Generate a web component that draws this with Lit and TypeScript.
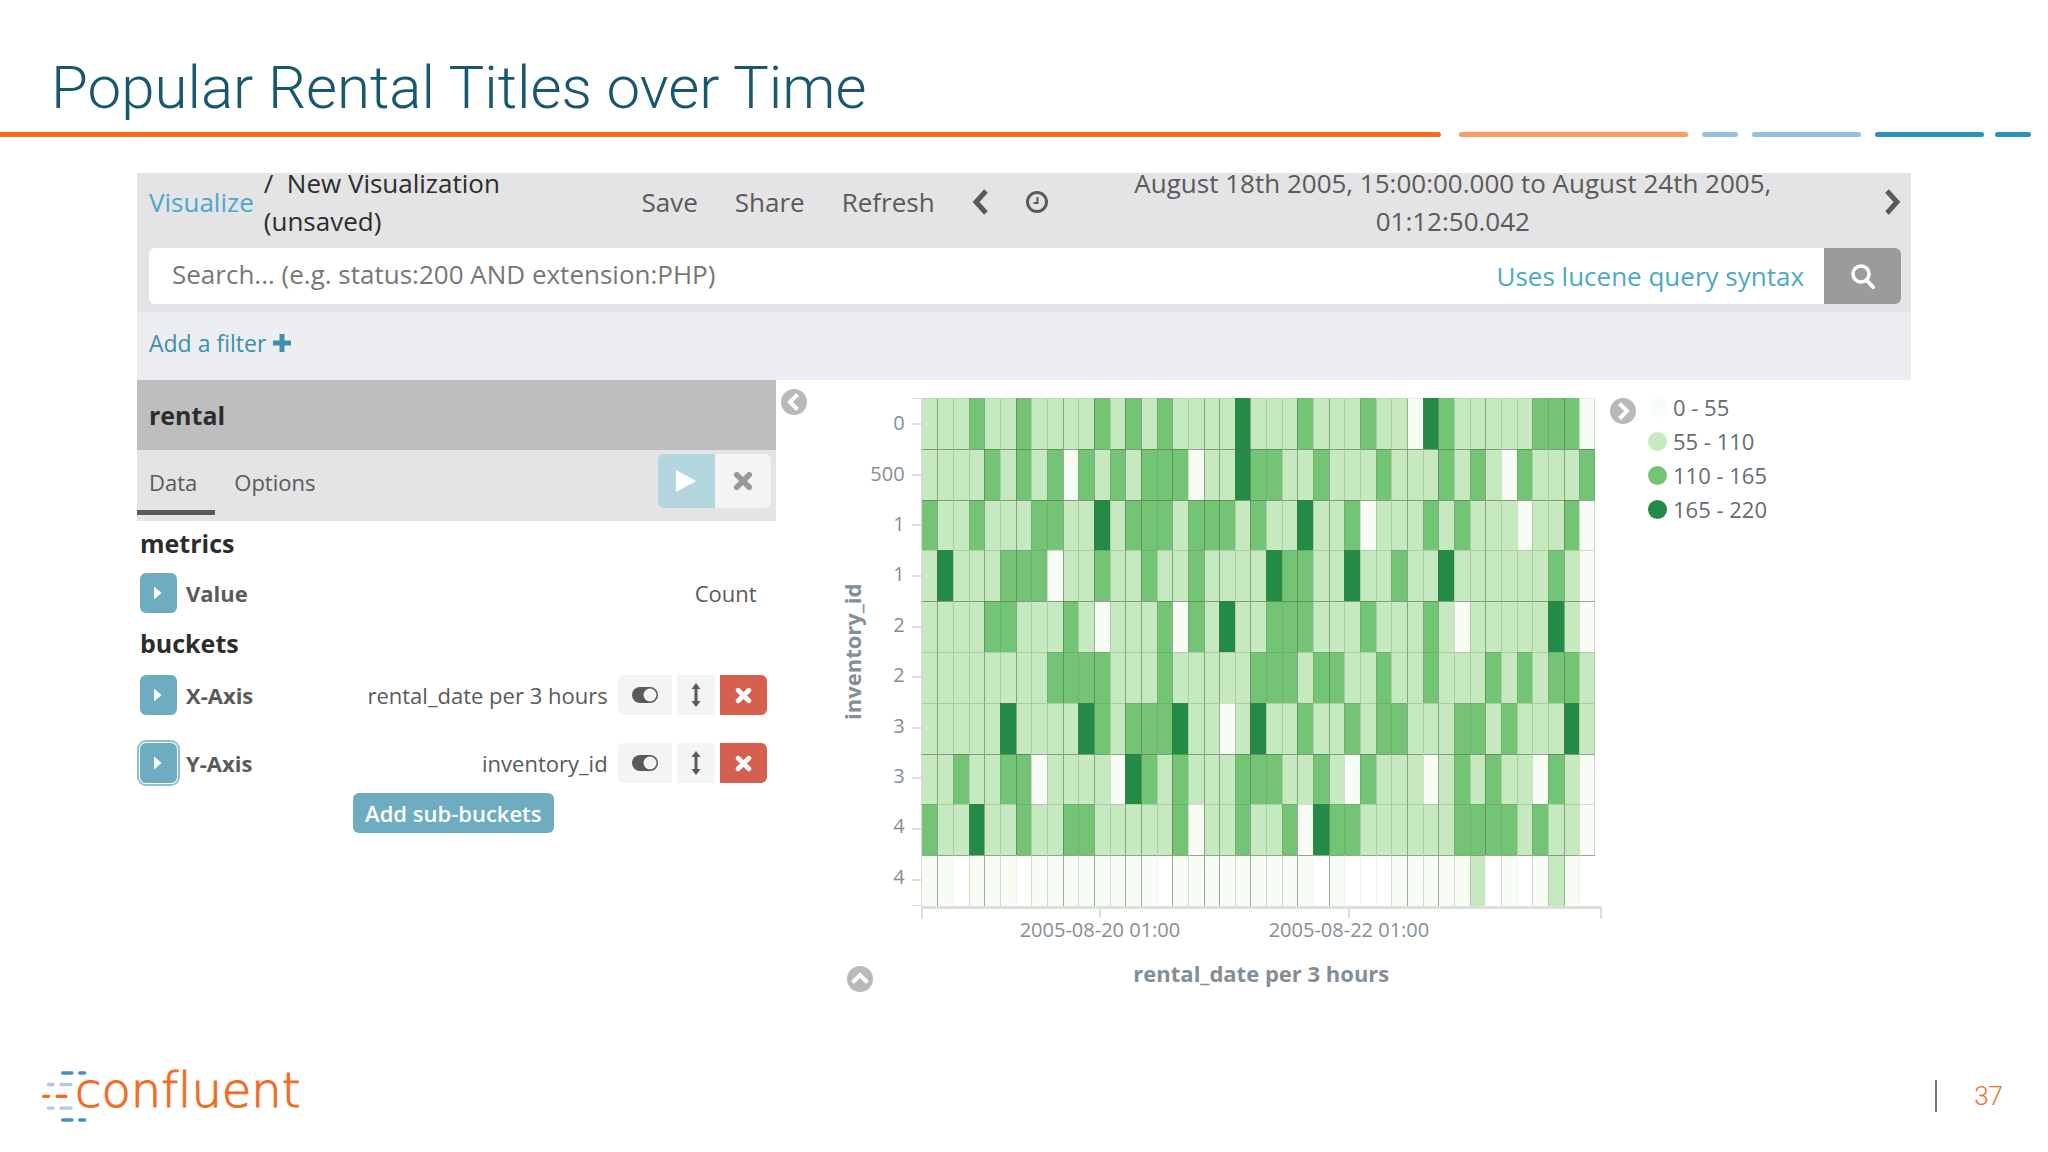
import { LitElement, html, css, svg } from 'lit';
import { customElement } from 'lit/decorators.js';
import { classMap } from 'lit/directives/class-map.js';

/* Heatmap levels per cell: 0..3 are the legend buckets, x is a cell without data. */
const COLUMNS = 43;

function buildRow(base: string, levels: Record<string, number[]>): string[] {
  const row = Array<string>(COLUMNS).fill(base);
  for (const [level, columns] of Object.entries(levels)) {
    for (const c of columns) row[c] = level;
  }
  return row;
}

const ROWS = [
  { label: '0', cells: buildRow('1', { 2: [3, 6, 11, 13, 15, 24, 28, 33, 39, 40, 41], 3: [20, 32], 0: [31, 42] }) },
  { label: '500', cells: buildRow('1', { 2: [4, 6, 8, 10, 12, 14, 15, 16, 21, 22, 25, 29, 33, 35, 38, 42], 3: [20], 0: [9, 17, 37] }) },
  { label: '1', cells: buildRow('1', { 2: [0, 3, 7, 8, 13, 14, 15, 17, 18, 19, 21, 27, 32, 34, 41], 3: [11, 24], 0: [28, 38, 42] }) },
  { label: '1', cells: buildRow('1', { 2: [5, 6, 7, 11, 14, 17, 23, 24, 30, 40], 3: [1, 22, 27, 33], 0: [8, 42] }) },
  { label: '2', cells: buildRow('1', { 2: [4, 5, 9, 15, 17, 22, 23, 24, 28, 32], 3: [19, 40], 0: [11, 16, 34, 42] }) },
  { label: '2', cells: buildRow('1', { 2: [8, 9, 10, 11, 15, 21, 22, 23, 25, 26, 29, 32, 36, 38, 40, 41] }) },
  { label: '3', cells: buildRow('1', { 2: [11, 13, 14, 15, 24, 27, 29, 30, 34, 35, 37], 3: [5, 10, 16, 21, 41], 0: [19] }) },
  { label: '3', cells: buildRow('1', { 2: [2, 5, 6, 14, 16, 20, 21, 22, 25, 28, 34, 36, 40], 3: [13], 0: [7, 12, 27, 32, 39, 42] }) },
  { label: '4', cells: buildRow('1', { 2: [0, 6, 9, 10, 16, 20, 23, 26, 27, 34, 35, 36, 37, 39], 3: [3, 25], 0: [17, 24, 42] }) },
  { label: '4', cells: buildRow('0', { 1: [35, 40], x: [2, 6, 15, 25, 27, 28, 29, 36, 38, 42] }) },
];

const STRONG_COLUMNS = new Set([1, 4, 6, 9, 11, 13, 14, 16, 18, 19, 21, 24, 26, 31, 33, 36, 41]);
const STRONG_ROWS = new Set([1, 2, 4, 7, 9]);

const LEGEND = [
  { level: 'l0', text: '0 - 55' },
  { level: 'l1', text: '55 - 110' },
  { level: 'l2', text: '110 - 165' },
  { level: 'l3', text: '165 - 220' },
];

const icon = (w: number, h: number, body: unknown) =>
  html`<svg width=${w} height=${h} viewBox="0 0 ${w} ${h}" aria-hidden="true">${body}</svg>`;

const chevronLeft = icon(16, 26, svg`<path d="M14 2 4 13l10 11" fill="none" stroke="currentColor" stroke-width="5"/>`);
const chevronRight = icon(16, 26, svg`<path d="M2 2l10 11L2 24" fill="none" stroke="currentColor" stroke-width="5"/>`);
const clock = icon(24, 26, svg`<circle cx="12" cy="13" r="9.5" fill="none" stroke="currentColor" stroke-width="3"/><path d="M12.500 8v6H8.500" fill="none" stroke="currentColor" stroke-width="2"/>`);
const magnifier = icon(26, 26, svg`<circle cx="11" cy="11" r="8" fill="none" stroke="currentColor" stroke-width="3.500"/><path d="M16.500 17l6.500 7" stroke="currentColor" stroke-width="4" stroke-linecap="round"/>`);
const plus = icon(18, 18, svg`<path d="M9 0v18M0 9h18" stroke="currentColor" stroke-width="5"/>`);
const play = icon(22, 22, svg`<path d="M1 0l20 11L1 22z" fill="currentColor"/>`);
const cross = (size: number) => html`<svg width=${size} height=${size} viewBox="0 0 16 16" aria-hidden="true"><path d="M3 3l10 10M13 3L3 13" stroke="currentColor" stroke-width="4.500" stroke-linecap="round"/></svg>`;
const caret = icon(10, 14, svg`<path d="M1 0.500l7.500 6.500L1 13.500z" fill="currentColor"/>`);
const toggle = icon(26, 16, svg`<rect width="26" height="16" rx="8" fill="currentColor"/><circle cx="18" cy="8" r="6.500" fill="#f4f3f5"/>`);
const upDown = icon(10, 24, svg`<path d="M5 4v16" stroke="currentColor" stroke-width="3"/><path d="M5 0l4.500 6h-9zM5 24l4.500-6h-9z" fill="currentColor"/>`);
const disc = (d: string) => icon(26, 26, svg`<circle cx="13" cy="13" r="13" fill="#b9b8ba"/><path d=${d} fill="none" stroke="#fff" stroke-width="4"/>`);
const discLeft = disc('M16.500 5.500 9 13l7.500 7.500');
const discRight = disc('M9.500 5.500 17 13l-7.500 7.500');
const discUp = disc('M5.500 16.500 13 9l7.500 7.500');

@customElement('query-bar')
export class QueryBar extends LitElement {
  static styles = css`
    :host { display: block; font: 26px/38px 'Open Sans', sans-serif; color: #5a5a5a; }
    a { text-decoration: none; color: #4aa9cb; }
    button { font: inherit; color: inherit; background: none; border: 0; padding: 0; cursor: pointer; }
    svg { display: block; }
    .top { background: #e4e3e5; padding: 0 10px 8px 12px; }
    .nav { display: flex; align-items: center; gap: 37px; height: 58px; padding-bottom: 17px; }
    .crumbs { display: flex; align-items: center; gap: 10px; width: 26%; }
    .current { color: #2d2d2d; padding-right: 24px; }
    .range { flex: 1; text-align: center; padding: 0 28px 0 0; }
    .search { display: flex; height: 56px; background: #fff; border-radius: 6px; overflow: hidden; align-items: center; }
    input { flex: 1; min-width: 0; border: 0; outline: 0; background: none; font: inherit; padding: 0 0 4px 23px; color: #333; }
    input::placeholder { color: #777; opacity: 1; }
    .go { width: 77px; height: 56px; margin-left: 20px; background: #9c9a9d; color: #fff; display: grid; place-items: center; }
    .filters { background: #eceef2; height: 62px; padding: 0 12px 6px; display: flex; align-items: center; font-size: 23px; }
    .filters a { display: flex; align-items: center; gap: 7px; color: #3c90ab; }
  `;
  render() {
    return html`
      <div class="top">
        <div class="nav">
          <div class="crumbs">
            <a href="#visualize">Visualize</a>
            <span class="current">/ &nbsp;New Visualization (unsaved)</span>
          </div>
          <button>Save</button>
          <button>Share</button>
          <button>Refresh</button>
          <button aria-label="Earlier">${chevronLeft}</button>
          <button aria-label="Time range">${clock}</button>
          <button class="range">August 18th 2005, 15:00:00.000 to August 24th 2005, 01:12:50.042</button>
          <button aria-label="Later">${chevronRight}</button>
        </div>
        <div class="search">
          <input type="text" aria-label="Search" placeholder="Search... (e.g. status:200 AND extension:PHP)" />
          <a href="#lucene">Uses lucene query syntax</a>
          <button class="go" aria-label="Run search">${magnifier}</button>
        </div>
      </div>
      <div class="filters"><a href="#filter">Add a filter ${plus}</a></div>
    `;
  }
}

@customElement('vis-editor')
export class VisEditor extends LitElement {
  static styles = css`
    :host { display: block; font: 22px/32px 'Open Sans', sans-serif; color: #5a5a5a; }
    button { font: inherit; color: inherit; border: 0; padding: 0; cursor: pointer; display: grid; place-items: center; }
    svg { display: block; }
    h2, h3 { margin: 0; font-size: 25px; line-height: 32px; font-weight: 700; color: #2d2d2d; }
    h2 { background: #bebdbf; padding: 19px 12px; }
    .bar { display: flex; justify-content: space-between; background: #e4e3e5; height: 71px; padding-right: 5px; }
    .tabs { display: flex; height: 65px; }
    .tab { background: none; padding: 4px 18px 0 19px; border-bottom: 5px solid transparent; }
    .tab.active { padding-left: 12px; border-color: #5a5a5a; }
    .apply { display: flex; height: 54px; margin-top: 4px; border-radius: 6px; overflow: hidden; }
    .run { width: 57px; background: #b3d6df; color: #fff; }
    .discard { width: 56px; background: #f4f3f5; color: #999; }
    .body { padding: 6px 9px 0 3px; }
    .row { display: flex; align-items: center; height: 40px; }
    .row b { margin-left: 9px; flex: 1; }
    .open { width: 37px; height: 40px; border-radius: 6px; background: #6eadc1; color: #fff; padding-right: 2px; }
    .open.focused { box-shadow: 0 0 0 1px #fff, 0 0 0 3px #8fc1cd; }
    .value { margin: 14px 0; }
    .value span { padding-right: 10px; }
    .axis { margin-top: 16px; }
    .axis.second { margin-top: 28px; }
    .tools { display: flex; gap: 5px; margin-left: 10px; }
    .tools button { height: 40px; background: #f4f3f5; width: 38px; }
    .tools .enable { width: 54px; border-radius: 6px 0 0 6px; }
    .tools .remove { width: 47px; border-radius: 0 6px 6px 0; background: #d6604f; color: #fff; }
    .add { margin: 10px auto 0; height: 40px; padding: 0 12px; border-radius: 6px; background: #6eadc1; color: #fff; font-weight: 600; }
  `;
  private axis(name: string, detail: string, second: boolean) {
    return html`
      <div class=${classMap({ row: true, axis: true, second })}>
        <button class=${classMap({ open: true, focused: second })} aria-label="Open ${name}">${caret}</button>
        <b>${name}</b><span>${detail}</span>
        <div class="tools">
          <button class="enable" aria-label="Disable ${name}">${toggle}</button>
          <button aria-label="Move ${name}">${upDown}</button>
          <button class="remove" aria-label="Remove ${name}">${cross(17)}</button>
        </div>
      </div>
    `;
  }
  render() {
    return html`
      <h2>rental</h2>
      <div class="bar">
        <div class="tabs">
          <button class="tab active">Data</button>
          <button class="tab">Options</button>
        </div>
        <div class="apply">
          <button class="run" aria-label="Apply changes">${play}</button>
          <button class="discard" aria-label="Discard changes">${cross(20)}</button>
        </div>
      </div>
      <div class="body">
        <h3>metrics</h3>
        <div class="row value">
          <button class="open" aria-label="Open Value">${caret}</button>
          <b>Value</b><span>Count</span>
        </div>
        <h3>buckets</h3>
        ${this.axis('X-Axis', 'rental_date per 3 hours', false)}
        ${this.axis('Y-Axis', 'inventory_id', true)}
        <button class="add">Add sub-buckets</button>
      </div>
    `;
  }
}

@customElement('heat-map')
export class HeatMap extends LitElement {
  static styles = css`
    :host { display: grid; grid-template-columns: 30px 45px 9px 1fr; grid-template-rows: 508px auto auto; font: 20px/24px 'Open Sans', sans-serif; color: #848e96; }
    svg { display: block; }
    .title { font-size: 22px; line-height: 30px; font-weight: 700; text-align: center; }
    .y-title { writing-mode: vertical-rl; transform: rotate(180deg); }
    .labels, .ticks { display: grid; grid-template-rows: repeat(10, 1fr); align-items: center; }
    .labels { justify-items: end; padding: 0 7px 4px 0; }
    .ticks { border: solid #ddd; border-width: 1px 0; }
    .ticks i { height: 2px; background: #ddd; }
    .plot { display: grid; grid-template-columns: repeat(43, 1fr); grid-template-rows: repeat(10, 1fr); padding-right: 7px; border-left: 1px solid #d5dcd5; }
    .cell { border: solid rgba(90, 120, 90, 0.25); border-width: 1px 0 0 1px; }
    .strong-left { border-left-color: rgba(80, 105, 80, 0.55); }
    .strong-top { border-top-color: rgba(80, 105, 80, 0.6); }
    .edge { border-right-width: 1px; }
    .first { border-left-width: 0; }
    .top { border-top-color: rgba(90, 120, 90, 0.1); }
    .l0 { background-color: #f7fcf5; }
    .l1 { background-color: #c7e9c0; }
    .l2 { background-color: #74c476; }
    .l3 { background-color: #238b45; }
    .blank { background-color: #fff; border-left-color: rgba(90, 120, 90, 0.1); }
    .x-axis { grid-column: 4; display: grid; grid-template-columns: 53fr 250fr 250fr 127fr; border: solid #dcdfdc; border-width: 3px 2px 0; height: 10px; }
    .x-axis div { display: flex; flex-direction: column; align-items: center; white-space: nowrap; }
    .x-axis i { flex: none; width: 2px; height: 9px; background: #dcdfdc; }
    .caption { grid-column: 4; padding-top: 39px; }
    .expand { grid-column: 1 / 4; padding: 47px 0 0 10px; }
    button { border: 0; background: none; padding: 0; display: block; }
  `;
  render() {
    return html`
      <div class="title y-title">inventory_id</div>
      <div class="labels">${ROWS.map((r) => html`<span>${r.label}</span>`)}</div>
      <div class="ticks">${ROWS.map(() => html`<i></i>`)}</div>
      <div class="plot">
        ${ROWS.map((r, y) => r.cells.map((level, x) => html`<div class=${classMap({
          cell: true,
          [level === 'x' ? 'blank' : `l${level}`]: true,
          'strong-left': STRONG_COLUMNS.has(x) && level !== 'x',
          'strong-top': STRONG_ROWS.has(y),
          first: x === 0,
          top: y === 0,
          edge: x === COLUMNS - 1 && y < 9,
        })}></div>`))}
      </div>
      <div class="x-axis">
        <span></span>
        <div><i></i>2005-08-20 01:00</div>
        <div><i></i>2005-08-22 01:00</div>
      </div>
      <div class="expand"><button aria-label="Show table">${discUp}</button></div>
      <div class="title caption">rental_date per 3 hours</div>
    `;
  }
}

@customElement('app-root')
export class AppRoot extends LitElement {
  static styles = css`
    :host { display: flex; flex-direction: column; min-height: 100vh; background: #fff; }
    svg { display: block; }
    h1 { margin: 0; padding: 44px 51px 0; font: 300 60px/88px Roboto, sans-serif; color: #17586d; }
    .rule { display: flex; gap: 14px; padding-right: 17px; }
    .rule i { height: 5px; border-radius: 0 3px 3px 0; background: #fb6a1b; flex: 1440 1 0; }
    .rule i + i { border-radius: 3px; }
    .rule .peach { background: #fb9c64; flex-grow: 229; margin-left: 4px; }
    .rule .sky { background: #93c2de; flex-grow: 109; }
    .rule .teal { background: #2993ba; flex-grow: 109; }
    .rule .short { flex-grow: 36; }
    .rule .teal.short { margin-left: -3px; }
    main { padding: 36px 137px 0; }
    .work { display: flex; align-items: flex-start; }
    vis-editor { flex: 0 0 36%; }
    .disc { border: 0; background: none; padding: 0; }
    .collapse { margin: 9px 0 0 5px; }
    heat-map { flex: 1; margin: 18px 8px 0 30px; }
    .hide { margin-top: 18px; }
    .legend { list-style: none; margin: 10px 0 0 12px; padding: 0; width: 263px; font: 22px/34px 'Open Sans', sans-serif; color: #666b75; }
    .legend li { display: flex; align-items: center; gap: 6px; }
    .legend i { width: 19px; height: 19px; border-radius: 50%; }
    .l0 { background: #f7fcf8; }
    .l1 { background: #c7e9c0; }
    .l2 { background: #74c476; }
    .l3 { background: #238b45; }
    footer { margin-top: auto; height: 112px; padding: 0 45px 0 40px; display: flex; align-items: center; justify-content: space-between; }
    .brand { display: flex; align-items: center; color: #f26b21; font: 200 48px/56px 'DejaVu Sans', sans-serif; font-variant-ligatures: none; -webkit-text-stroke: 1px #f26b21; text-decoration: none; }
    .brand span { margin-left: -14px; padding-bottom: 12px; }
    .page { font: 300 26px/32px Roboto, sans-serif; color: #f0702c; border-left: 2px solid #777; padding-left: 37px; }
  `;
  render() {
    return html`
      <h1>Popular Rental Titles over Time</h1>
      <div class="rule">
        <i></i><i class="peach"></i><i class="sky short"></i><i class="sky"></i><i class="teal"></i><i class="teal short"></i>
      </div>
      <main>
        <query-bar></query-bar>
        <div class="work">
          <vis-editor></vis-editor>
          <button class="disc collapse" aria-label="Collapse editor">${discLeft}</button>
          <heat-map></heat-map>
          <button class="disc hide" aria-label="Hide legend">${discRight}</button>
          <ul class="legend">
            ${LEGEND.map((l) => html`<li><i class=${l.level}></i>${l.text}</li>`)}
          </ul>
        </div>
      </main>
      <footer>
        <a class="brand" href="#home">
          <svg width="49" height="55" viewBox="60 55 147 165" fill="none" stroke-width="10" stroke-linecap="round" aria-hidden="true">
            <path stroke="#4590c4" d="M128 67h28M179 67h15M128 208h28M179 208h15"/>
            <path stroke="#b2c6e8" d="M85 101.500h14M123 101.500h30M85 172.500h14M123 172.500h30"/>
            <path stroke="#f26b21" d="M71 137h15M111 137h27"/>
          </svg>
          <span>confluent</span>
        </a>
        <div class="page">37</div>
      </footer>
    `;
  }
}
